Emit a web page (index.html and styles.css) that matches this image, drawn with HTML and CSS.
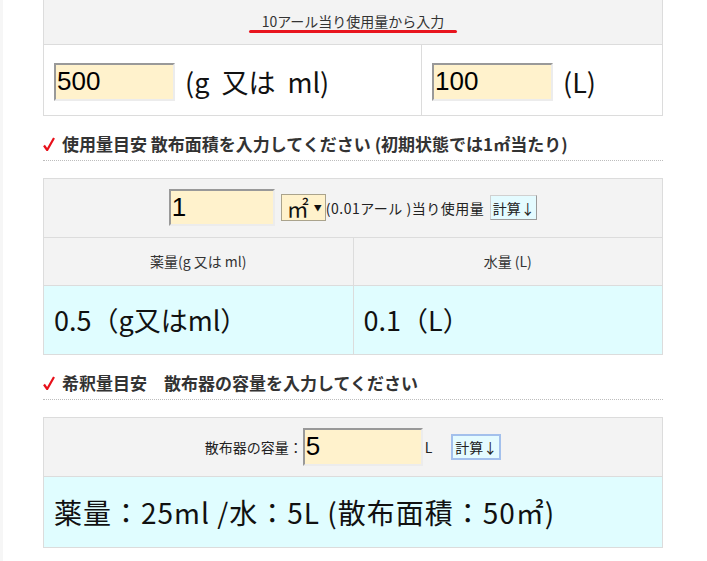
FILE: index.html
```html
<!DOCTYPE html>
<html lang="ja">
<head>
<meta charset="utf-8">
<title>使用量計算</title>
<link rel="stylesheet" href="styles.css">
</head>
<body>
<div class="page">
  <table class="calc t1">
    <colgroup><col class="c1a"><col></colgroup>
    <tr>
      <th colspan="2" class="head">
        <span class="title">10アール当り使用量から入力</span>
        <div class="bar"></div>
      </th>
    </tr>
    <tr>
      <td><div class="inrow"><input class="num w121" value="500"><span class="unit">(g 又は ml)</span></div></td>
      <td><div class="inrow"><input class="num w121" value="100"><span class="unit">(L)</span></div></td>
    </tr>
  </table>

  <h3 class="sec"><svg class="chk" width="12" height="14" viewBox="0 0 12 14"><path d="M1 8.5 L4.2 13 L11 1" fill="none" stroke="#e8101a" stroke-width="2.2" stroke-linejoin="round"/></svg>使用量目安 散布面積を入力してください (初期状態では1㎡当たり)</h3>

  <table class="calc t2">
    <colgroup><col class="half"><col class="half"></colgroup>
    <tr>
      <td colspan="2" class="gray">
        <div class="toolbar">
          <input class="num w106" value="1">
          <span class="sel"><span class="sqm">㎡</span><span class="arr">▼</span></span>
          <span class="small wide">(0.01アール )当り使用量</span>
          <button class="btn">計算↓</button>
        </div>
      </td>
    </tr>
    <tr class="colhead">
      <td>薬量(g 又は ml)</td>
      <td>水量 (L)</td>
    </tr>
    <tr class="result">
      <td>0.5（g又はml）</td>
      <td>0.1（L）</td>
    </tr>
  </table>

  <h3 class="sec"><svg class="chk" width="12" height="14" viewBox="0 0 12 14"><path d="M1 8.5 L4.2 13 L11 1" fill="none" stroke="#e8101a" stroke-width="2.2" stroke-linejoin="round"/></svg>希釈量目安　散布器の容量を入力してください</h3>

  <table class="calc t3">
    <tr>
      <td class="gray">
        <div class="toolbar">
          <span class="small">散布器の容量：</span>
          <input class="num w120" value="5">
          <span class="small lunit">L</span>
          <button class="btn focus">計算↓</button>
        </div>
      </td>
    </tr>
    <tr class="result big">
      <td>薬量：25ml /水：5L (散布面積：50㎡)</td>
    </tr>
  </table>
</div>
</body>
</html>
```

FILE: styles.css
```css
html, body {
  margin: 0;
  padding: 0;
  background: #ffffff;
}

body {
  font-family: "Noto Sans CJK JP", "Noto Sans", sans-serif;
  color: #222;
}

.page {
  width: 620px;
  padding-left: 40px;
  border-left: 3px solid #f6f6f6;
  min-height: 561px;
}

.calc {
  width: 620px;
  border-collapse: collapse;
  table-layout: fixed;
  border: 1px solid #dcdcdc;
}

.calc td,
.calc th {
  border: 1px solid #dcdcdc;
  padding: 0;
}

.t1 {
  border-top: 0;
}

.c1a {
  width: 378px;
}

.half {
  width: 50%;
}

.calc th.head {
  background: #f3f3f3;
  height: 44px;
  box-sizing: border-box;
  padding: 13px 0 0;
  vertical-align: top;
  text-align: center;
  font-weight: normal;
  border-top: 0;
}

.title {
  display: block;
  font-size: 14px;
  line-height: 17px;
  color: #333;
}

.bar {
  width: 208px;
  height: 3px;
  border-radius: 2px;
  background: #e8141e;
  margin: 0 auto;
}

.inrow {
  display: flex;
  align-items: center;
  gap: 10px;
  height: 70px;
  box-sizing: border-box;
  padding: 4px 10px 0;
}

.num {
  box-sizing: border-box;
  height: 38px;
  background: #fff2cc;
  border: 2px solid;
  border-color: #999 #ececec #ececec #999;
  font-family: "Liberation Sans", Arial, sans-serif;
  font-size: 26px;
  color: #000;
  padding: 0 1px;
  margin: 0;
  outline: none;
}

.w121 { width: 121px; }
.w120 { width: 120px; }
.w106 { width: 106px; height: 37px; }

.unit {
  font-size: 27px;
  color: #111;
  word-spacing: 6px;
}

.sec {
  margin: 16px 0 17px;
  padding-bottom: 4px;
  border-bottom: 1px dotted #bdbdbd;
  font-size: 17px;
  line-height: 24px;
  font-weight: bold;
  color: #333;
  display: flex;
  align-items: center;
  gap: 7px;
}

.chk {
  flex: none;
}

.gray {
  background: #f3f3f3;
}

.toolbar {
  display: flex;
  justify-content: center;
  align-items: center;
  height: 58px;
}

.sel {
  display: inline-flex;
  align-items: center;
  box-sizing: border-box;
  width: 45px;
  height: 27px;
  margin-left: 6px;
  background: #fff2cc;
  border: 1px solid #aaa38c;
  padding-left: 5px;
}

.sqm {
  font-size: 22px;
  line-height: 25px;
  color: #111;
}

.arr {
  font-size: 8px;
  margin-left: 5px;
  color: #111;
  line-height: 10px;
}

.small {
  font-size: 14px;
  color: #222;
}

.small.wide {
  letter-spacing: 0.5px;
}

.btn {
  box-sizing: border-box;
  width: 47px;
  height: 25px;
  margin: 0 0 0 6px;
  padding: 0;
  background: #e4fbff;
  border: 1px solid #d0d0d0;
  border-right-color: #9a9a9a;
  border-bottom-color: #9a9a9a;
  font-family: "Noto Sans CJK JP", sans-serif;
  font-size: 14px;
  color: #222;
}

.btn.focus {
  width: 50px;
  height: 26px;
  border: 2px solid #a3c0ec;
  margin-left: 19px;
}

.lunit {
  margin-left: 2px;
}

.colhead td {
  background: #f3f3f3;
  height: 47px;
  text-align: center;
  font-size: 14px;
  color: #333;
}

.result td {
  background: #e0fdff;
  height: 68px;
  padding-left: 10px;
  font-size: 27px;
  color: #111;
}

.result.big td {
  height: 70px;
  font-size: 28px;
  letter-spacing: 1px;
}
```
